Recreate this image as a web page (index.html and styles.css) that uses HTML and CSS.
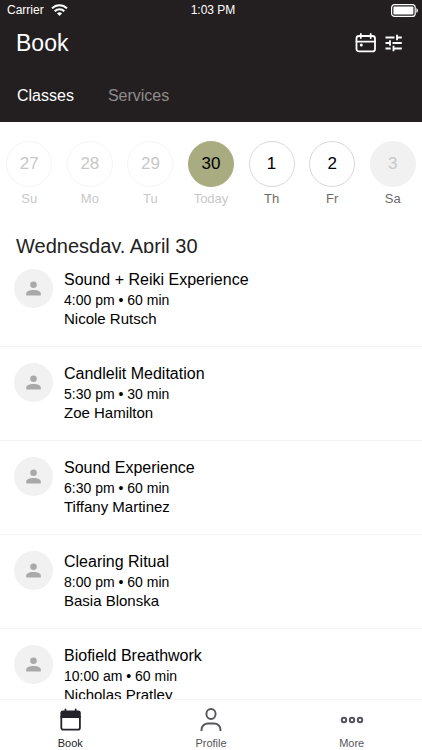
FILE: index.html
```html
<!DOCTYPE html>
<html lang="en">
<head>
<meta charset="utf-8">
<meta name="viewport" content="width=device-width, initial-scale=1">
<title>Book</title>
<link rel="stylesheet" href="styles.css">
</head>
<body>
<div class="app">
  <header class="header">
    <div class="status">
      <div class="carrier">
        <span>Carrier</span>
        <svg width="17" height="12" viewBox="0 0 17 12" fill="none" stroke="#fff" stroke-width="2"><path d="M1 4.400C5.200.2 11.800.2 16 4.400"/><path d="M3.700 7.200C6.400 4.500 10.600 4.500 13.300 7.200"/><path d="M8.500 12 5.900 9.300C7.400 7.900 9.600 7.900 11.100 9.300Z" fill="#fff" stroke="none"/></svg>
      </div>
      <span>1:03 PM</span>
      <svg class="battery" width="28" height="13" viewBox="0 0 28 13"><rect x=".6" y=".6" width="23.600" height="11.800" rx="3" fill="none" stroke="#fff" stroke-width="1.200"/><rect x="2.400" y="2.400" width="20" height="8.200" rx="1" fill="#fff"/><path d="M25.400 4.200c2 .7 2 3.900 0 4.600z" fill="#fff"/></svg>
    </div>
    <div class="title-bar">
      <h1>Book</h1>
      <div class="actions">
        <button type="button" aria-label="Choose date">
          <svg width="22" height="20" viewBox="0 0 22 20" fill="none" stroke="#fff" stroke-width="1.800" stroke-linecap="round"><rect x="1.500" y="3" width="18.500" height="15.400" rx="2.500"/><path d="M1.500 8.600H20M5.800 1v4M15.700 1v4"/><circle cx="6.300" cy="12" r="1.500" fill="#fff" stroke="none"/></svg>
        </button>
        <button type="button" aria-label="Filters">
          <svg width="18" height="18" viewBox="0 0 18 18" fill="none" stroke="#fff" stroke-width="1.800"><path d="M.5 3.500h9M12 .8v5.400M12 3.500h4.800M.5 9h4.500M5 6.300v5.400M7.500 9h9.300M.5 14.500h5.200M8.500 11.800v5.400M8.500 14.500h8.300"/></svg>
        </button>
      </div>
    </div>
    <nav class="tabs" aria-label="Booking type">
      <a class="active" href="#classes">Classes</a>
      <a href="#services">Services</a>
    </nav>
  </header>

  <div class="days">
    <button type="button" class="day past"><span class="num">27</span><span>Su</span></button>
    <button type="button" class="day past"><span class="num">28</span><span>Mo</span></button>
    <button type="button" class="day past"><span class="num">29</span><span>Tu</span></button>
    <button type="button" class="day today"><span class="num">30</span><span>Today</span></button>
    <button type="button" class="day"><span class="num">1</span><span>Th</span></button>
    <button type="button" class="day"><span class="num">2</span><span>Fr</span></button>
    <button type="button" class="day closed"><span class="num">3</span><span>Sa</span></button>
  </div>

  <h2>Wednesday, April 30</h2>

  <svg class="symbols" aria-hidden="true"><symbol id="person" viewBox="0 0 16 16"><circle cx="8" cy="4" r="3.500" fill="#a9a9a9"/><path d="M.2 15.500v-2c0-2.500 3.500-3.900 7.800-3.900s7.800 1.400 7.800 3.900v2z" fill="#a9a9a9"/></symbol></svg>
  <ul class="list">
    <li><span class="avatar"><svg width="15" height="15"><use href="#person"/></svg></span><div><h3>Sound + Reiki Experience</h3><p class="time">4:00 pm • 60 min</p><p class="teacher">Nicole Rutsch</p></div></li>
    <li><span class="avatar"><svg width="15" height="15"><use href="#person"/></svg></span><div><h3>Candlelit Meditation</h3><p class="time">5:30 pm • 30 min</p><p class="teacher">Zoe Hamilton</p></div></li>
    <li><span class="avatar"><svg width="15" height="15"><use href="#person"/></svg></span><div><h3>Sound Experience</h3><p class="time">6:30 pm • 60 min</p><p class="teacher">Tiffany Martinez</p></div></li>
    <li><span class="avatar"><svg width="15" height="15"><use href="#person"/></svg></span><div><h3>Clearing Ritual</h3><p class="time">8:00 pm • 60 min</p><p class="teacher">Basia Blonska</p></div></li>
    <li><span class="avatar"><svg width="15" height="15"><use href="#person"/></svg></span><div><h3>Biofield Breathwork</h3><p class="time">10:00 am • 60 min</p><p class="teacher">Nicholas Pratley</p></div></li>
  </ul>

  <nav class="bottom" aria-label="Main">
    <a class="active" href="#book">
      <svg width="24" height="24" viewBox="0 0 24 24"><path d="M3.300 9h18.600v10.700a2 2 0 0 1-2 2H5.300a2 2 0 0 1-2-2z" fill="none" stroke="#232329" stroke-width="1.800"/><path d="M2.400 9.500V5a2.500 2.500 0 0 1 2.500-2.500h15.400A2.500 2.500 0 0 1 22.800 5v4.500z" fill="#232329"/><path d="M7.500 1.500v3M17.700 1.500v3" stroke="#232329" stroke-width="1.800" stroke-linecap="round"/></svg>
      <span>Book</span>
    </a>
    <a href="#profile">
      <svg width="24" height="24" viewBox="0 0 24 24" fill="none" stroke="#55555a" stroke-width="1.900"><ellipse cx="12" cy="6" rx="4.600" ry="5"/><path d="M2.500 23v-1c0-4 3-6.500 6.500-6.500h6c3.500 0 6.500 2.500 6.500 6.500v1"/></svg>
      <span>Profile</span>
    </a>
    <a href="#more">
      <svg width="24" height="24" viewBox="0 0 24 24" fill="none" stroke="#55555a" stroke-width="2"><circle cx="4" cy="12" r="2.200"/><circle cx="12" cy="12" r="2.200"/><circle cx="20" cy="12" r="2.200"/></svg>
      <span>More</span>
    </a>
  </nav>
</div>
</body>
</html>
```
FILE: styles.css
```css
* { box-sizing: border-box; }
body, h1, h2, h3, p, ul { margin: 0; padding: 0; }
body {
  font-family: "Liberation Sans", Arial, sans-serif;
  color: #000;
  background: #fff;
}
h1, h2, h3 { font-weight: 400; }
button {
  padding: 0;
  border: 0;
  background: none;
  font: inherit;
  color: inherit;
}
a { text-decoration: none; color: inherit; }
svg { display: block; }

.app {
  height: 100vh;
  display: flex;
  flex-direction: column;
}

.header {
  flex: none;
  background: #231f20;
  color: #fff;
}
.status {
  display: grid;
  grid-template-columns: 1fr auto 1fr;
  align-items: center;
  height: 20px;
  padding: 0 3px 0 7px;
  font-size: 12px;
}
.carrier { display: flex; align-items: center; gap: 7px; }
.battery { justify-self: end; }
.title-bar {
  display: flex;
  align-items: center;
  justify-content: space-between;
  height: 46px;
  padding: 0 19px 0 16px;
}
h1 { font-size: 23px; }
.actions { display: flex; align-items: center; gap: 8px; }
.tabs {
  display: flex;
  align-items: center;
  gap: 34px;
  height: 56px;
  padding: 4px 17px 0;
  font-size: 16px;
  color: #8f8b8c;
}
.tabs .active { color: #fff; }

.days {
  flex: none;
  display: grid;
  grid-template-columns: repeat(7, 1fr);
  margin: 0 -1px;
  padding-top: 19px;
}
.day {
  display: flex;
  flex-direction: column;
  align-items: center;
  gap: 4px;
  font-size: 13px;
  line-height: 16px;
  color: #6b6b6b;
}
.num {
  display: flex;
  align-items: center;
  justify-content: center;
  width: 46px;
  height: 46px;
  border: 1px solid #d9d9d9;
  border-radius: 50%;
  font-size: 17px;
  color: #000;
}
.past, .past .num, .today { color: #c8c8c8; }
.past .num { border-color: #f5f5f5; }
.today .num { background: #a9ac80; border-color: #a9ac80; }
.closed .num { background: #f1f1f1; border-color: #f1f1f1; color: #c8c8c8; }

h2 {
  flex: none;
  height: 46px;
  padding: 27px 16px 0;
  overflow: hidden;
  font-size: 20px;
  line-height: 24px;
  color: #222;
}

.symbols { position: absolute; width: 0; height: 0; }
.list {
  flex: 1;
  min-height: 0;
  overflow: hidden;
  list-style: none;
}
.list li {
  display: flex;
  gap: 11px;
  height: 94px;
  padding: 16px 14px 0;
  border-bottom: 1px solid #f3f3f3;
}
.avatar {
  flex: none;
  display: flex;
  align-items: center;
  justify-content: center;
  width: 39px;
  height: 39px;
  border-radius: 50%;
  background: #f1f1f1;
}
h3 { font-size: 16px; line-height: 22px; }
.time { font-size: 14px; line-height: 18px; }
.teacher { font-size: 15px; line-height: 19px; }

.bottom {
  flex: none;
  display: grid;
  grid-template-columns: repeat(3, 1fr);
  height: 51px;
  padding-top: 8px;
  border-top: 1px solid #f3f3f3;
  background: #fff;
  font-size: 11px;
  line-height: 14px;
  color: #55555a;
}
.bottom a {
  display: flex;
  flex-direction: column;
  align-items: center;
  gap: 4px;
}
.bottom .active { color: #232329; }
```
